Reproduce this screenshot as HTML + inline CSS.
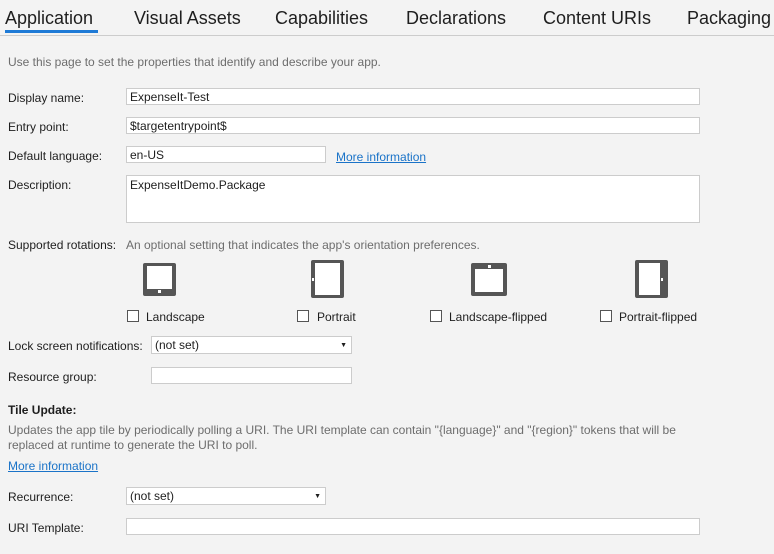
<!DOCTYPE html>
<html><head><style>
body{margin:0;width:774px;height:554px;background:#f3f3f3;font-family:"Liberation Sans",sans-serif;font-size:12px;color:#1e1e1e;position:relative;overflow:hidden}
.a{position:absolute;white-space:nowrap;margin-top:2px}
.tab{position:absolute;top:8px;font-size:18px;color:#1e1e1e}
.in{position:absolute;background:#fff;border:1px solid #ccc;box-sizing:border-box;height:17px;padding-left:3px;line-height:17px}
.lnk{color:#1a73c8;text-decoration:underline}
.cb{position:absolute;width:12px;height:12px;border:1px solid #555;background:#fff;box-sizing:border-box}
.g{color:#6d6d6d}
</style></head><body>
<div class="tab" style="left:5px">Application</div>
<div class="a" style="left:5px;top:28px;width:93px;height:3px;background:#1e7ad6"></div>
<div class="tab" style="left:134px">Visual Assets</div>
<div class="tab" style="left:275px">Capabilities</div>
<div class="tab" style="left:406px">Declarations</div>
<div class="tab" style="left:543px">Content URIs</div>
<div class="tab" style="left:687px">Packaging</div>
<div class="a" style="left:0;top:33px;width:774px;height:1px;background:#ccc"></div>

<div class="a g" style="left:8px;top:53px">Use this page to set the properties that identify and describe your app.</div>

<div class="a" style="left:8px;top:89px">Display name:</div>
<div class="in" style="left:126px;top:88px;width:574px">ExpenseIt-Test</div>
<div class="a" style="left:8px;top:118px">Entry point:</div>
<div class="in" style="left:126px;top:117px;width:574px">$targetentrypoint$</div>
<div class="a" style="left:8px;top:147px">Default language:</div>
<div class="in" style="left:126px;top:146px;width:200px">en-US</div>
<div class="a lnk" style="left:336px;top:148px">More information</div>
<div class="a" style="left:8px;top:176px">Description:</div>
<div class="in" style="left:126px;top:175px;width:574px;height:48px;padding-top:1px">ExpenseItDemo.Package</div>

<div class="a" style="left:8px;top:236px">Supported rotations:</div>
<div class="a g" style="left:126px;top:236px">An optional setting that indicates the app's orientation preferences.</div>

<svg style="position:absolute;left:0;top:0" width="774" height="554">
<g fill="#555">
<rect x="143" y="263" width="33" height="33" rx="2"/>
<rect x="311" y="260" width="33" height="38" rx="2"/>
<rect x="471" y="263" width="36" height="33" rx="2"/>
<rect x="635" y="260" width="33" height="38" rx="2"/>
</g>
<g fill="#fff">
<rect x="147" y="266" width="25" height="23"/><rect x="158" y="290" width="3" height="3"/>
<rect x="315" y="263" width="25" height="32"/><rect x="312" y="278" width="2" height="3"/>
<rect x="475" y="269" width="28" height="23"/><rect x="488" y="265" width="3" height="3"/>
<rect x="639" y="263" width="21" height="32"/><rect x="661" y="278" width="2" height="3"/>
</g>
</svg>
<div class="cb" style="left:127px;top:310px"></div><div class="a" style="left:146px;top:308px">Landscape</div>
<div class="cb" style="left:297px;top:310px"></div><div class="a" style="left:317px;top:308px">Portrait</div>
<div class="cb" style="left:430px;top:310px"></div><div class="a" style="left:449px;top:308px">Landscape-flipped</div>
<div class="cb" style="left:600px;top:310px"></div><div class="a" style="left:619px;top:308px">Portrait-flipped</div>

<div class="a" style="left:8px;top:337px">Lock screen notifications:</div>
<div class="in" style="left:151px;top:336px;width:201px;height:18px">(not set)<span style="position:absolute;right:4px;top:0;font-size:7px">▼</span></div>
<div class="a" style="left:8px;top:368px">Resource group:</div>
<div class="in" style="left:151px;top:367px;width:201px"></div>

<div class="a" style="left:8px;top:401px;font-weight:bold">Tile Update:</div>
<div class="a g" style="left:8px;top:421px">Updates the app tile by periodically polling a URI. The URI template can contain "{language}" and "{region}" tokens that will be</div>
<div class="a g" style="left:8px;top:436px">replaced at runtime to generate the URI to poll.</div>
<div class="a lnk" style="left:8px;top:457px">More information</div>

<div class="a" style="left:8px;top:488px">Recurrence:</div>
<div class="in" style="left:126px;top:487px;width:200px;height:18px">(not set)<span style="position:absolute;right:4px;top:0;font-size:7px">▼</span></div>
<div class="a" style="left:8px;top:519px">URI Template:</div>
<div class="in" style="left:126px;top:518px;width:574px"></div>
</body></html>
